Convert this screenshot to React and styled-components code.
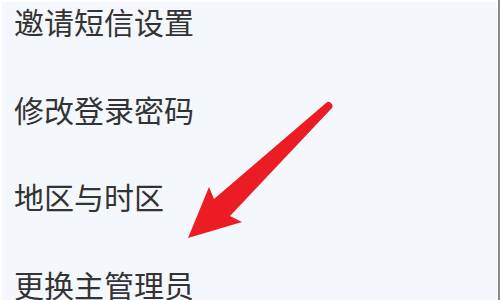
import React from 'react';
import styled, { createGlobalStyle } from 'styled-components';

const GlobalStyle = createGlobalStyle`
    html, body {
        margin: 0;
        padding: 0;
        background: #ffffff;
    }
`;

const Page = styled.div`
    position: relative;
    display: flex;
    width: 500px;
    height: 300px;
    overflow: hidden;
    background: #ffffff;
`;

const Panel = styled.div`
    flex: 1;
    display: flex;
    flex-direction: column;
    gap: 57.67px;
    padding: 4px 0 0 12px;
    border-top: 2px solid #ffffff;
    border-left: 2px solid #ffffff;
    border-right: 1px solid #ffffff;
    background: #f4f7fb;
    overflow: hidden;
`;

const MenuItem = styled.div`
    flex: none;
    font-family: "Microsoft YaHei", "Noto Sans CJK SC", sans-serif;
    font-size: 30px;
    line-height: 30px;
    color: #333333;
    white-space: nowrap;
`;

const ScrollEdge = styled.div`
    width: 2px;
    flex: none;
    background: #8a8a8a;
`;

const Pointer = styled.svg`
    position: absolute;
    inset: 0;
    pointer-events: none;
`;

const items = ['邀请短信设置', '修改登录密码', '地区与时区', '更换主管理员'];

const App = () => (
    <>
        <GlobalStyle />
        <Page>
            <Panel>
                {items.map((label) => (
                    <MenuItem key={label}>{label}</MenuItem>
                ))}
            </Panel>
            <ScrollEdge />
            <Pointer width="500" height="300" viewBox="0 0 500 300">
                <path
                    d="M188 238 L209 187 L214 199 L326 103 A3.6 3.6 0 0 1 331 109 L230 216 L242 222 Z"
                    fill="#ec1c24"
                    strokeLinejoin="round"
                />
            </Pointer>
        </Page>
    </>
);

export default App;
